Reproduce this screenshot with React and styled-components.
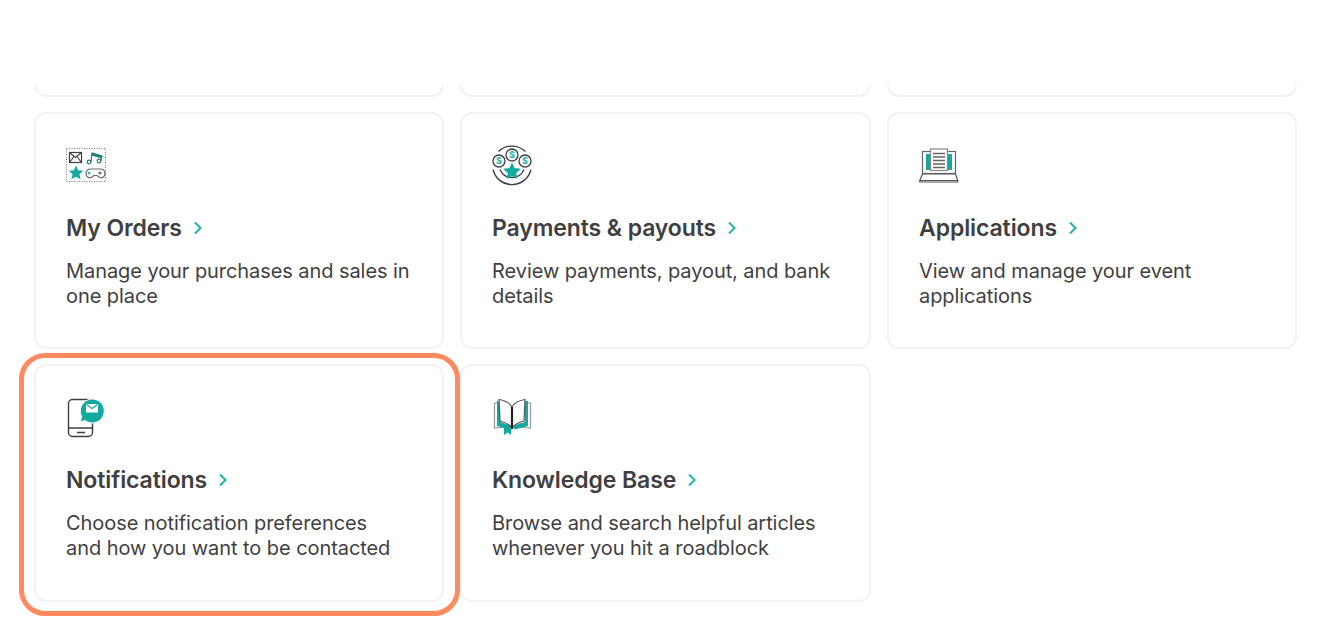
import React from 'react';
import styled, { createGlobalStyle } from 'styled-components';

const teal = '#12aaa0';
const ink = '#3f3f42';

const GlobalStyle = createGlobalStyle`
  html, body { margin: 0; padding: 0; background: #fff; }
  body { font-family: "Inter", "Noto Sans", sans-serif; color: ${ink}; overflow: hidden; }
`;

const Page = styled.div`
  width: 1324px;
  height: 638px;
  box-sizing: border-box;
  padding: 85px 27px 0 34px;
  overflow: hidden;
`;

const Grid = styled.div`
  display: grid;
  grid-template-columns: 410px 411px 410px;
  grid-template-rows: 12px 237px 238px;
  gap: 15px 16px;
`;

// top row is scrolled under the header, only the bottom edge shows
const CutCard = styled.div`
  border: 2px solid #f2f2f2;
  border-top: none;
  border-radius: 0 0 12px 12px;
`;

const Card = styled.div`
  position: relative;
  box-sizing: border-box;
  border: 2px solid #f2f2f2;
  border-radius: 12px;
  padding: 30px 30px 0;
`;

const Highlight = styled.div`
  position: absolute;
  top: -13px;
  left: -17px;
  right: -18px;
  bottom: -16px;
  border: 5px solid #ff8a60;
  border-radius: 26px;
  pointer-events: none;
`;

const IconBox = styled.div`
  width: 44px;
  height: 44px;
  svg { display: block; }
`;

const Title = styled.h3`
  display: flex;
  align-items: center;
  gap: 11px;
  margin: 25px 0 0;
  font-size: 23px;
  line-height: 30px;
  font-weight: 600;
  letter-spacing: -0.1px;
  color: ${ink};
`;

const Desc = styled.p`
  margin: 16px 0 0;
  font-size: 20px;
  line-height: 25px;
  font-weight: 400;
  letter-spacing: -0.07px;
  white-space: pre-line;
  color: ${ink};
`;

const Chevron = () => (
  <svg width="10" height="14" viewBox="0 0 10 14" fill="none">
    <path d="M2 1.500 7.500 7 2 12.500" stroke="#1db5ac" strokeWidth="2" />
  </svg>
);

const OrdersIcon = () => (
  <svg width="44" height="44" viewBox="0 0 44 44" fill="none" stroke={ink} strokeWidth="1.2">
    <rect x="0.500" y="4.500" width="39" height="33" stroke="#777" strokeWidth="1" strokeDasharray="1 1.500" />
    <rect x="3.500" y="8.500" width="12" height="10" />
    <path d="M3.500 8.500l6 5 6-5M3.500 18.500l4.500-6M15.500 18.500l-4.500-6" />
    <circle cx="23" cy="18" r="1.800" stroke="#1f7f7c" />
    <circle cx="33" cy="17" r="1.800" stroke="#1f7f7c" />
    <path d="M25 18l1-9 10 3-1 5" stroke="#1f7f7c" />
    <path d="M26 9l10 3-.4 2.500L25.700 11.500z" fill="#1f7f7c" stroke="none" />
    <path d="M10 23l1.700 3.800 4.100.5-3 2.700.9 4L10 32l-3.700 2 .9-4-3-2.700 4.100-.5z" fill={teal} stroke={teal} />
    <path d="M25 25h9c3 0 5 2 5 4.700 0 3.300-3.500 5-6 3.300l-2-1.500h-3l-2 1.500c-2.500 1.700-6 0-6-3.300 0-2.700 2-4.700 5-4.700z" stroke="#666" />
    <path d="M23 27.500v3M21.500 29h3" stroke={teal} />
    <circle cx="34" cy="29" r="1" stroke="#666" />
  </svg>
);

const PaymentsIcon = () => (
  <svg width="44" height="44" viewBox="0 0 44 44" fill="none" stroke={ink} strokeWidth="1.3">
    <g transform="translate(0 1)">
      <path d="M6.500 6.500a19.500 19.500 0 0 1 27 0" />
      <path d="M1 24.500a19.500 19.500 0 0 0 38 0" />
      <path d="M8 24.500a13 13 0 0 0 24 0" />
      <circle cx="7" cy="16" r="6" />
      <circle cx="20" cy="10" r="6" />
      <circle cx="33" cy="16" r="6" />
      <g fontFamily="Inter, sans-serif" fontSize="9" fontWeight="700" fill="#1db5ac" stroke="none" textAnchor="middle">
        <text x="7" y="19.300">$</text>
        <text x="20" y="13.300">$</text>
        <text x="33" y="19.300">$</text>
      </g>
      <path d="M20 19l2.200 4.700 5.100.6-3.800 3.400 1 5L20 30.200l-4.500 2.500 1-5-3.800-3.400 5.100-.6z" fill={teal} stroke={teal} />
    </g>
  </svg>
);

const ApplicationsIcon = () => (
  <svg width="44" height="44" viewBox="0 0 44 44" fill="none" stroke={ink} strokeWidth="1.2">
    <rect x="3.500" y="7.500" width="33" height="22" stroke="#666" />
    <rect x="7" y="10" width="26" height="16" fill={teal} stroke="none" />
    <rect x="11.500" y="5" width="17" height="21.500" fill="#fff" stroke="#888" />
    <path d="M14 9.500h12M14 13h12M14 16.500h12M14 20h12M14 23.500h12" stroke="#666" strokeWidth="1.300" />
    <path d="M3.500 30 .8 36.500h38L36.500 30zM.8 36.500v1.500h38v-1.500" stroke="#555" fill="#fff" />
  </svg>
);

const NotifyIcon = () => (
  <svg width="44" height="44" viewBox="0 0 44 44" fill="none" stroke={ink} strokeWidth="1.400">
    <rect x="2.500" y="3.500" width="24" height="37" rx="4" />
    <path d="M2.500 32h24M11 36.500h8" />
    <path d="M19 24.500c-2.500 1-4 1-5 1.300l1.800-5A12 12 0 1 1 19 24.500z" fill={teal} stroke="#fff" strokeWidth="1" />
    <rect x="20" y="8" width="12" height="8.500" rx="0.500" fill="#fff" stroke="none" />
    <path d="M20.500 8.500l5.500 4 5.500-4" stroke={teal} strokeWidth="1.200" />
  </svg>
);

const BookIcon = () => (
  <svg width="44" height="44" viewBox="0 0 44 44" fill="none" stroke={ink} strokeWidth="1.200">
    <path d="M5 7H2.500v25l15-1.500M35 7h3.500v25l-15-1.500" stroke="#999" />
    <path d="M5 5v25l13 3.500 2-3.500-12-4V5z" fill={teal} stroke="none" />
    <path d="M36 5v25l-13 3.500-3-3.500 13-4V5z" fill={teal} stroke="none" />
    <path d="M7 3.500c6 1 11 3.500 13 7.500v21c-3-4-8-6-12-7zM33 3.500c-6 1-11 3.500-13 7.500v21c3-4 8-6 12-7z" fill="#fff" stroke="#555" />
    <path d="M20 11v22" stroke="#222" strokeWidth="2.200" />
    <path d="M12 31l7 2v6l-3.500-2.500L12 39z" fill={teal} stroke="none" />
  </svg>
);

const items = [
  { title: 'My Orders', text: 'Manage your purchases and sales in one place', Icon: OrdersIcon },
  { title: 'Payments & payouts', text: 'Review payments, payout, and bank details', Icon: PaymentsIcon },
  { title: 'Applications', text: 'View and manage your event applications', Icon: ApplicationsIcon },
  { title: 'Notifications', text: 'Choose notification preferences\nand how you want to be contacted', Icon: NotifyIcon, active: true },
  { title: 'Knowledge Base', text: 'Browse and search helpful articles whenever you hit a roadblock', Icon: BookIcon },
];

export default function App() {
  return (
    <Page>
      <GlobalStyle />
      <Grid>
        <CutCard />
        <CutCard />
        <CutCard />
        {items.map(({ title, text, Icon, active }) => (
          <Card key={title}>
            <IconBox><Icon /></IconBox>
            <Title>{title} <Chevron /></Title>
            <Desc>{text}</Desc>
            {active && <Highlight />}
          </Card>
        ))}
      </Grid>
    </Page>
  );
}
